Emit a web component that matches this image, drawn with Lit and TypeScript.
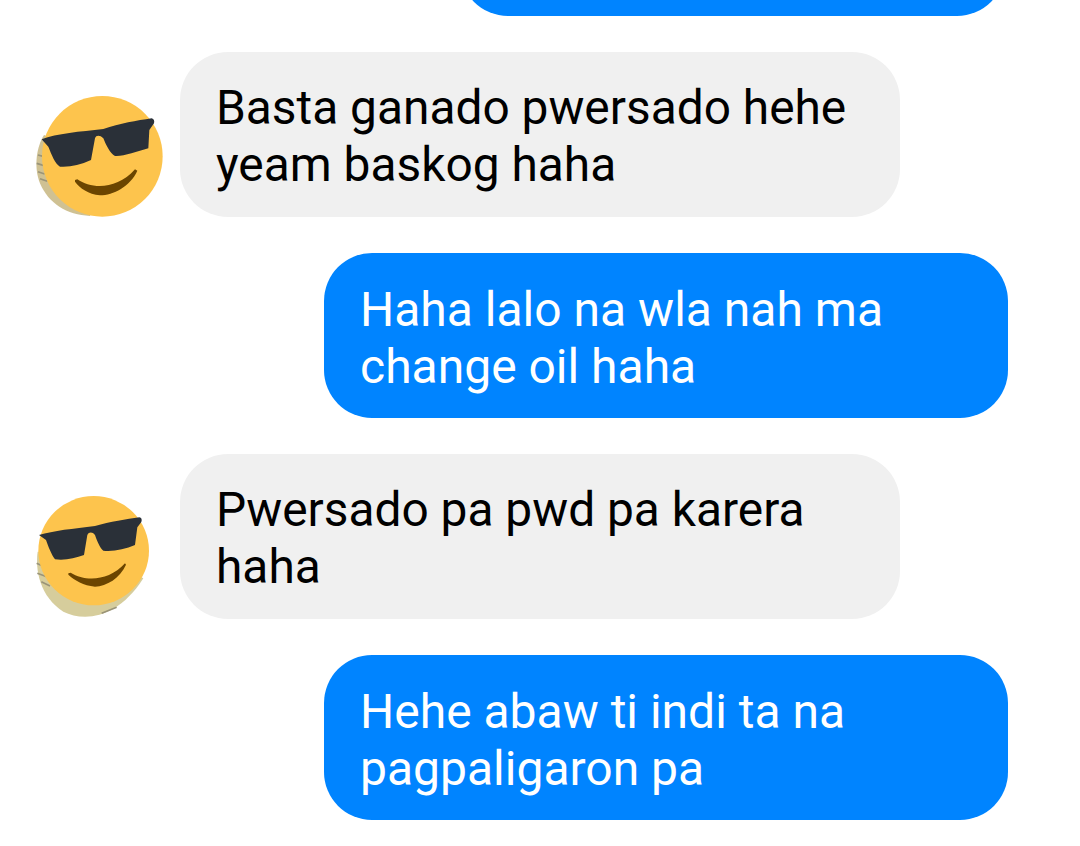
import { LitElement, html, css } from "lit";
import { customElement } from "lit/decorators.js";

@customElement("app-root")
export class AppRoot extends LitElement {
  static styles = css`
    :host { display: block; width: 1080px; height: 846px; overflow: hidden; background: #fff; font-family: Roboto, "Liberation Sans", sans-serif; font-size: 47.85px; line-height: 57px; }
    .top { height: 16px; overflow: hidden; padding-left: 460px; padding-right: 75px; display: flex; align-items: flex-end; }
    .top div { flex: 1; height: 100px; background: #0084ff; border-radius: 48px; }
    .row { display: flex; align-items: flex-start; height: 165px; margin-top: 36px; }
    .me { justify-content: flex-end; padding-right: 72px; }
    .bubble { box-sizing: border-box; height: 165px; border-radius: 48px; padding: 28px 36px 0; white-space: pre-line; }
    .them .bubble { width: 720px; background: #f0f0f0; color: #000; }
    .me .bubble { width: 684px; background: #0084ff; color: #fff; font-size: 48px; }
    .slot { width: 160px; margin-left: 20px; flex: none; }
    .av { display: block; }
    .s1 { margin-top: 28px; }
    .s2 { margin-top: 26px; }
  `;
  render() {
    const av1 = html`<div class="slot s1"><svg class="av" width="170" height="150" viewBox="0 0 510 450">
      <path d="M72 165 C50 200 40 260 60 310 C85 370 140 405 210 408 L247 229 Z" fill="#cfc193"/>
      <path d="M54 225 L72 230 M50 250 L70 256 M54 275 L74 282 M60 296 L82 304" stroke="#9a9478" stroke-width="5" fill="none"/>
      <circle cx="247" cy="229" r="181" fill="#fdc44d"/>
      <path d="M65 178 C110 160 180 155 250 147 C300 130 350 122 395 115 Q405 118 402 130 L388 150 L385 205 C350 215 310 230 285 228 C270 220 258 195 250 175 C240 165 228 165 225 175 L213 240 C180 255 150 262 120 260 C105 250 95 225 85 200 Z" fill="#2a3038"/>
      <path d="M165 300 L172 298 C215 328 290 330 345 268 L352 272 C330 320 280 345 240 346 C205 342 180 325 165 305 Z" fill="#6b4500"/>
    </svg></div>`;
    const av2 = html`<div class="slot s2"><svg class="av" width="170" height="150" viewBox="0 0 510 450">
      <path d="M53 215 C45 270 60 350 130 395 C190 425 290 420 370 295 L221 212 Z" fill="#d6cd9c"/>
      <path d="M50 250 L75 262 M52 280 L80 290 M64 305 L90 318 M245 400 L290 382" stroke="#9a9478" stroke-width="5" fill="none"/>
      <ellipse cx="221" cy="212" rx="166" ry="164" fill="#fdc44d"/>
      <path d="M57 165 C100 152 160 146 225 138 C270 125 320 118 358 112 Q368 114 364 126 L352 142 L345 195 C315 208 280 215 250 212 C240 205 230 180 225 165 C218 155 206 155 202 165 L192 225 C165 235 135 242 105 238 C95 225 85 200 78 180 Z" fill="#2a3038"/>
      <path d="M145 280 L152 278 C195 305 265 305 315 250 L318 254 C300 295 260 318 225 320 C190 316 165 302 145 284 Z" fill="#6b4500"/>
    </svg></div>`;
    return html`
      <div class="top"><div></div></div>
      <div class="row them">${av1}<div class="bubble">Basta ganado pwersado hehe
yeam baskog haha</div></div>
      <div class="row me"><div class="bubble">Haha lalo na wla nah ma
change oil haha</div></div>
      <div class="row them">${av2}<div class="bubble">Pwersado pa pwd pa karera
haha</div></div>
      <div class="row me"><div class="bubble">Hehe abaw ti indi ta na
pagpaligaron pa</div></div>
    `;
  }
}
